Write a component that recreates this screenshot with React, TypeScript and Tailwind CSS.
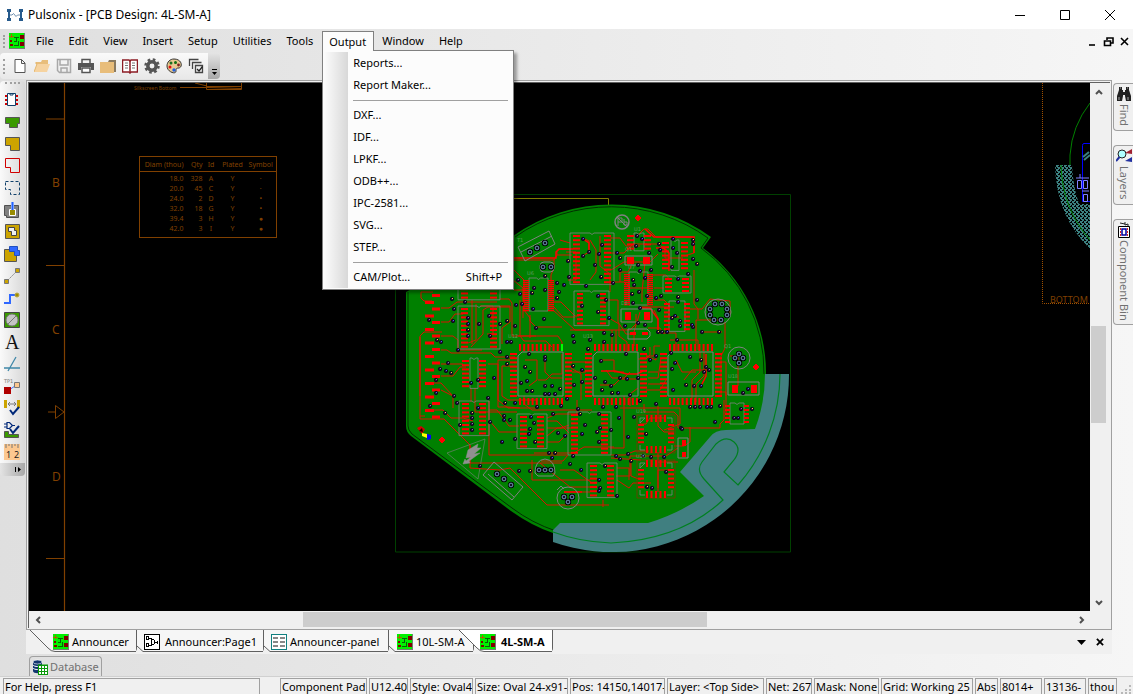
import type { ReactNode } from 'react';

/* ---------- ICONS ---------- */

type IconProps = { children: ReactNode; className?: string };

function Icon({ children, className = 'w-4 h-4' }: IconProps) {
    return (
        <svg viewBox="0 0 16 16" className={`${className} shrink-0`} fill="none" aria-hidden="true">
            {children}
        </svg>
    );
}

const PcbIcon = () => (
    <Icon>
        <g shapeRendering="crispEdges">
            <rect width="16" height="16" fill="#00f000" />
            <path d="M2 1v4M0 3h5" stroke="#b06000" />
            <path d="M11 2h4v4h-4zM11 9h4v4h-4zM1 7h2v2H1zM1 11h3v2H1z" fill="#800000" />
            <path d="M5 4.500h5M7.500 4v4M5 8.500h3M5 12.500h4V8" stroke="#086008" />
            <path d="M15.500 0v16M0 15.500h16" stroke="#708070" />
        </g>
    </Icon>
);

const SchematicIcon = () => (
    <Icon>
        <g shapeRendering="crispEdges" stroke="#000">
            <rect x=".5" y=".5" width="15" height="15" fill="#fff" />
            <path d="M2.500 2.500h2v3h-2zM2.500 9.500h2v3h-2zM5 4.500h3M5 11.500h3M11 8h2M13.500 6.500v3" />
            <path d="M7.500 5.500h2l1 1v3l-1 1h-2z" />
        </g>
    </Icon>
);

const PanelIcon = () => (
    <Icon>
        <g shapeRendering="crispEdges">
            <rect x=".5" y=".5" width="15" height="15" fill="#fff" stroke="#108080" />
            <path d="M2 3h5v2H2zM9 3h5v2H9zM2 7h5v2H2zM9 7h5v2H9zM2 11h5v2H2zM9 11h5v2H9z" fill="#888" />
        </g>
    </Icon>
);

const DatabaseIcon = () => (
    <Icon>
        <path d="M1 3v9c0 3 9 3 9 0V3" fill="#12356f" />
        <ellipse cx="5.500" cy="3" rx="4.500" ry="2" fill="#12356f" stroke="#fff" strokeWidth=".6" />
        <path d="M1 6c1 2 8 2 9 0M1 9c1 2 8 2 9 0" stroke="#fff" />
        <path d="M6 5.500h10V16H6z" fill="#0a9a0a" />
        <path d="M7 7h2v2H7zM10 7h2v2h-2zM13 7h2v2h-2zM7 10h2v2H7zM10 10h2v2h-2zM13 10h2v2h-2zM7 13h2v2H7zM10 13h2v2h-2zM13 13h2v2h-2z" fill="#fff" />
    </Icon>
);

const LogoIcon = () => (
    <Icon>
        <path d="M0 2h4v3H3v6h1v3H0v-3h1V5H0zM12 2h4v3h-1v6h1v3h-4v-3h1V5h-1z" fill="#265a8c" />
        <path d="M3 8h2l1.500-1.500L9 9.500 10.500 8H13" stroke="#7090b0" />
    </Icon>
);

const FILE_TOOLS = [
    {
        label: 'New',
        icon: <path d="M3 1.500h6.500l3.500 3.500v9.500H3zM9.500 1.500v4H13" fill="#fff" stroke="#555" />,
    },
    {
        label: 'Open',
        icon: (
            <>
                <path d="M2 4h5l1-2h6v4H2z" fill="#e8bd7a" />
                <path d="M3 6h13l-3 8H0z" fill="#f6d3a0" />
                <path d="M0 14 3 6h-1v-2" stroke="#e4b870" />
            </>
        ),
    },
    {
        label: 'Save',
        icon: (
            <>
                <path d="M1.500 1.500h13v13h-11l-2-2z" stroke="#a8a8a8" strokeWidth="1.500" />
                <path d="M4 2v5h8V2M5 14v-4h6v4" stroke="#a8a8a8" strokeWidth="1.500" />
            </>
        ),
    },
    {
        label: 'Print',
        icon: (
            <>
                <path d="M4 5V1.500h8V5" stroke="#555" strokeWidth="1.500" />
                <path d="M0 5h16v7h-3V9H3v3H0z" fill="#555" />
                <path d="M4 10h8v4.500H4z" fill="#fff" stroke="#555" strokeWidth="1.500" />
            </>
        ),
    },
    {
        label: 'Library',
        icon: (
            <>
                <path d="M0 4h14v11H0z" fill="#e8bd7a" />
                <path d="M8 4l1-2h7v12h-2V4z" fill="#8a7a60" />
            </>
        ),
    },
    {
        label: 'Report book',
        icon: (
            <>
                <path d="M.5 2h6.500l1 1 1-1h6.500v12H9l-1 1-1-1H.5z" fill="#fff" stroke="#8c1c24" strokeWidth="1.500" />
                <path d="M8 3v12" stroke="#8c1c24" strokeWidth="1.500" />
                <path d="M3 5h3M3 7.500h3M3 10h3M10 5h3M10 7.500h3M10 10h3" stroke="#777" />
            </>
        ),
    },
    {
        label: 'Options',
        icon: (
            <>
                <circle cx="8" cy="8" r="4.200" stroke="#555" strokeWidth="3.500" />
                <circle cx="8" cy="8" r="6.500" stroke="#555" strokeWidth="2.500" strokeDasharray="2.600 2.500" />
            </>
        ),
    },
    {
        label: 'Colours',
        icon: (
            <>
                <path d="M8 1c8 0 9 8 5 9-3 0-3 1-3 3 0 4-9 1-9-5 0-4 3-7 7-7z" fill="#e8c890" stroke="#333" />
                <circle cx="5" cy="5" r="1.500" fill="#207020" />
                <circle cx="9.500" cy="4.500" r="1.500" fill="#107010" />
                <circle cx="12.500" cy="7" r="1.400" fill="#802020" />
                <circle cx="4" cy="9" r="1.500" fill="#e01010" />
                <circle cx="8" cy="12" r="1.700" fill="#2060e0" />
            </>
        ),
    },
    {
        label: 'Design rule check',
        icon: (
            <>
                <path d="M1.500 8V1.500h9M4.500 11V4.500h9M7.500 14.500v-7h7v7z" stroke="#444" strokeWidth="1.300" />
                <path d="M9 11l2 2 3.500-4.500" stroke="#222" strokeWidth="1.300" />
            </>
        ),
    },
];

const DESIGN_TOOLS = [
    {
        label: 'Component',
        icon: (
            <>
                <path d="M1 3h3v2H1zM1 7h3v2H1zM1 11h3v2H1zM11 3h3v2h-3zM11 7h3v2h-3zM11 11h3v2h-3z" fill="#d00000" />
                <path d="M3.500 1.500h8v12h-8z" fill="#fff" stroke="#10406a" />
                <path d="M6 2v1h3V2" stroke="#10406a" />
            </>
        ),
    },
    {
        label: 'Pad shape',
        icon: <path d="M1.500 3.500h14v6h-2v4h-8v-4h-4z" fill="#3a9a00" stroke="#555" />,
    },
    { label: 'Copper', icon: <path d="M1.500 1.500h14v13h-9v-5h-5z" fill="#cca400" stroke="#555" /> },
    { label: 'Board', icon: <path d="M1.500 .5h14v14h-9v-5h-5z" stroke="#d00000" /> },
    {
        label: 'Area',
        icon: <path d="M1.500 1.500h14v13h-9v-5h-5z" stroke="#10406a" strokeDasharray="3 2" />,
    },
    {
        label: 'Pour copper',
        icon: (
            <>
                <path d="M.5 3.500h14v12h-12v-2h-2z" fill="#808080" stroke="#505050" />
                <path d="M5.500 7.500h6v6h-6z" fill="#998c00" stroke="#fff" />
                <path d="M8.500 0v8" stroke="#78a0ff" strokeWidth="3" />
                <path d="M8.500 0v8" stroke="#2060ff" />
            </>
        ),
    },
    {
        label: 'Cutout',
        icon: (
            <>
                <path d="M1.500 .5h14v14h-14z" fill="#cca400" stroke="#555" />
                <path d="M4.500 3.500h6v3h2v5h-5v-4h-3z" fill="#f0f0f0" stroke="#444" />
            </>
        ),
    },
    {
        label: 'Template',
        icon: (
            <>
                <path d="M.5 3.500h12v12H.5z" fill="#cca400" stroke="#555" />
                <path d="M5.500 .5h8v4h2v5h-5v-4h-5z" fill="#3068ff" stroke="#2050c0" />
            </>
        ),
    },
    {
        label: 'Connection',
        icon: (
            <>
                <path d="M4 12l8-8" stroke="#888" strokeDasharray="2 1" />
                <path d="M.5 11.500h4v4h-4zM11.500 .5h4v4h-4z" fill="#cca400" stroke="#777" />
            </>
        ),
    },
    {
        label: 'Track',
        icon: (
            <>
                <path d="M0 13h6V5h6" stroke="#3068ff" strokeWidth="2" />
                <circle cx="13" cy="5" r="2" fill="#a08c00" stroke="#b8a840" />
            </>
        ),
    },
    {
        label: 'Via',
        icon: (
            <>
                <path d="M.5 .5h15v15H.5z" fill="#3a9a00" stroke="#444" />
                <circle cx="8" cy="8" r="6" fill="#c4c4c4" stroke="#777" />
                <path d="M4 12l8-8" stroke="#777" />
            </>
        ),
    },
    {
        label: 'Text',
        icon: (
            <text x="1" y="15" fontSize="20" fontFamily="Liberation Serif, serif" fill="#111">A</text>
        ),
    },
    {
        label: 'Line',
        icon: <path d="M0 12h16M4 15L12 1" stroke="#4088a8" strokeWidth="1.300" />,
    },
    {
        label: 'Test point',
        icon: (
            <>
                <text x="0" y="5" fontSize="5" fontFamily="DejaVu Sans, sans-serif" fill="#777">TP1</text>
                <path d="M5 12l6-4" stroke="#4070ff" />
                <path d="M0 9h7v7H0z" fill="#b00000" />
                <path d="M10.500 4.500h5v5h-5z" fill="#fcc890" stroke="#777" />
            </>
        ),
    },
    {
        label: 'Check spacing',
        icon: (
            <>
                <path d="M0 0h3v8H0zM13 0h3v8h-3z" fill="#cca400" />
                <path d="M4 4h8M6 2L4 4l2 2M10 2l2 2-2 2" stroke="#777" />
                <path d="M6 10l3 4 6-7" stroke="#002878" strokeWidth="2" />
            </>
        ),
    },
    {
        label: 'Check nets',
        icon: (
            <>
                <path d="M.5 9.500h4v3h10v3H.5z" fill="#3a9a00" stroke="#555" />
                <path d="M0 2h3M0 5h3M3 .5h2.500L8 3v1L5.500 6.500H3zM8 3.500h3" stroke="#002878" strokeWidth="1.200" />
                <path d="M6 7l3 4 6-7" stroke="#002878" strokeWidth="2" />
            </>
        ),
    },
    {
        label: 'Measure',
        icon: (
            <>
                <path d="M0 0h16v16H0z" fill="#fcc890" />
                <path d="M2 0v4M5 0v2M8 0v4M11 0v2M14 0v4" stroke="#777" />
                <text x="2" y="14" fontSize="9" fontFamily="Noto Sans, sans-serif" fill="#222">1</text>
                <text x="10" y="14" fontSize="9" fontFamily="Noto Sans, sans-serif" fill="#222">2</text>
            </>
        ),
    },
];

/* ---------- MENU ---------- */

const MENUS = ['File', 'Edit', 'View', 'Insert', 'Setup', 'Utilities', 'Tools', 'Output', 'Window', 'Help'];

const OUTPUT_GROUPS = [
    [{ label: 'Reports...' }, { label: 'Report Maker...' }],
    [
        { label: 'DXF...' },
        { label: 'IDF...' },
        { label: 'LPKF...' },
        { label: 'ODB++...' },
        { label: 'IPC-2581...' },
        { label: 'SVG...' },
        { label: 'STEP...' },
    ],
    [{ label: 'CAM/Plot...', keys: 'Shift+P' }],
];

function OutputMenu() {
    return (
        <div
            role="menu"
            className="absolute left-0 top-full z-20 -mt-px w-[192px] border border-[#808080] bg-[#fcfcfc] p-px shadow-[3px_3px_3px_rgba(0,0,0,0.35)]"
        >
            <div className="bg-linear-to-r from-[#fcfcfc] to-[#d8d8d8] bg-[length:24px_100%] bg-no-repeat">
                {OUTPUT_GROUPS.map((group, i) => (
                    <div key={i}>
                        {i > 0 && <div className="flex h-2 items-center pl-[29px] pr-1"><hr className="w-full border-[#a0a0a0]" /></div>}
                        {group.map((item) => (
                            <button
                                key={item.label}
                                role="menuitem"
                                className="flex h-[22px] w-full items-center justify-between pl-[29px] pr-[10px]"
                            >
                                <span>{item.label}</span>
                                {'keys' in item && <span>{item.keys}</span>}
                            </button>
                        ))}
                    </div>
                ))}
            </div>
        </div>
    );
}

/* ---------- BOARD ---------- */

type Point = [number, number];

const range = (n: number) => Array.from({ length: n }, (_, i) => i);

function Pads({ x, y, w, h, n, dx = 0, dy = 0 }: { x: number; y: number; w: number; h: number; n: number; dx?: number; dy?: number }) {
    return (
        <>
            {range(n).map((i) => (
                <rect key={i} x={x + dx * i} y={y + dy * i} width={w} height={h} fill="#ff0000" />
            ))}
        </>
    );
}

// dual in line part: outline plus a column of pads at each side
function Dip({ x, y, w, n, pad = 7, inset = 3, pitch = 4.2 }: { x: number; y: number; w: number; n: number; pad?: number; inset?: number; pitch?: number }) {
    const h = n * pitch + 1;
    const padHeight = pitch < 3 ? 1.3 : 2;
    return (
        <g>
            <path
                d={`M${x} ${y}h${w / 2 - 2}q2 3 4 0h${w / 2 - 2}v${h}h${-w}z`}
                fill="none"
                stroke="#808080"
                strokeWidth=".8"
            />
            <Pads x={x + inset} y={y + 2} w={pad} h={padHeight} n={n} dy={pitch} />
            <Pads x={x + w - inset - pad} y={y + 2} w={pad} h={padHeight} n={n} dy={pitch} />
        </g>
    );
}

function Quad({ x, y }: { x: number; y: number }) {
    return (
        <g>
            <path d={`M${x + 4} ${y}h41v44h-45v-40z`} fill="none" stroke="#808080" />
            <Pads x={x + 1} y={y - 8} w={2} h={7} n={11} dx={4.2} />
            <Pads x={x + 1} y={y + 46} w={2} h={7} n={11} dx={4.2} />
            <Pads x={x - 8} y={y + 1} w={7} h={2} n={11} dy={4.2} />
            <Pads x={x + 47} y={y + 1} w={7} h={2} n={11} dy={4.2} />
        </g>
    );
}

function Plcc({ x, y }: { x: number; y: number }) {
    return (
        <g>
            <path d={`M${x - 3} ${y - 3}h38v38h-38z`} fill="none" stroke="#a02000" strokeWidth=".6" />
            <path
                d={`M${x} ${y + 5}v-5h5zM${x + 27} ${y}h5v5M${x + 32} ${y + 27}v5h-5M${x + 5} ${y + 32}h-5v-5`}
                fill="none"
                stroke="#808080"
                strokeWidth=".8"
            />
            <Pads x={x + 6} y={y - 3} w={2} h={7} n={5} dx={4.5} />
            <Pads x={x + 6} y={y + 28} w={2} h={7} n={5} dx={4.5} />
            <Pads x={x - 2} y={y + 6} w={6} h={2} n={5} dy={4.3} />
            <Pads x={x + 28} y={y + 6} w={6} h={2} n={5} dy={4.3} />
        </g>
    );
}

function Holes({ at }: { at: Point[] }) {
    return (
        <>
            {at.map(([x, y]) => (
                <circle key={`${x}-${y}`} cx={x} cy={y} r="2" fill="#101020" stroke="#000" strokeWidth="2.400" />
            ))}
            {at.map(([x, y]) => (
                <circle key={`${x}-${y}-ring`} cx={x} cy={y} r="1.900" stroke="#78a8c8" fill="#101020" strokeWidth=".9" />
            ))}
        </>
    );
}

const TRACKS = [
    // left bank
    'M432 301h-8l-3-3v-6h12', 'M420 396v-60l4-4h18', 'M425 416h-5v-79', 'M441 308h8l8-6h40',
    'M441 322h8l6-8h8', 'M441 336h12l5 4v10h24', 'M441 350h6l4 3h40l4 4h20', 'M441 364h22',
    'M441 376h12l7-9h6', 'M433 383h8l12 13', 'M433 410h10l8 8h12l10 3', 'M420 416v3h24l10 10 16 16v23l30 2 10-2 37 37h62',
    'M470 445v18h92', 'M441 390l12 6v12', 'M472 300v44', 'M476 304v36l-8 3', 'M480 306h13v28h-6',
    'M500 306h10v16l-8 6v16', 'M500 299h9l3 4v33h24', 'M471 347l12-13v-24l5-3h22',
    // upper centre
    'M514 260h40l3-5h15', 'M554 259v9l-3 7v22', 'M557 255v-4l3-2h10', 'M514 270l10 10v30l6 8v20',
    'M530 315v6l6 6h26', 'M553 306l10 11h12', 'M553 302h8l14 14h4', 'M553 310l22 20h30',
    'M518 336h40l4 6v8', 'M520 300v36l4 5h22l6 6', 'M513 280l10 8v30', 'M514 290h12M560 240l10 3M566 252h10v28h-8',
    'M583 238l6 3v11l-5 3', 'M590 240l6 10v22l-6 8', 'M600 236v30l10 8v18', 'M570 330h60l6-6v-10',
    'M610 253h14l9-9h14', 'M610 238h10l6 8h14', 'M610 282h14l6 6h18', 'M611 270l13-8h26l8-8',
    'M608 300h10v22l8 12h10', 'M609 318l10 6v12l8 6v12', 'M612 330v14', 'M616 330v18',
    // upper right
    'M638 235l6-6h4l8 8h38v16l-10 3', 'M651 244h8l6 6v8h18', 'M645 262l-3 30v10', 'M634 260l-6 12h-8v10',
    'M652 275h14l4 5', 'M654 300h10l5 5v12h10', 'M654 288h10', 'M694 270v34l4 5v10', 'M690 309h12l8-10 20 2v14h-6',
    'M696 344v-24h23', 'M700 332h22', 'M725 322v26l-4 8v40', 'M730 356h8v30', 'M654 310l4 8v15h18v18',
    'M640 307h34M640 312l-6 20v14', 'M650 347v8l-4 4h-8', 'M660 346h-6v10h-8', 'M648 328h12l4 6', 'M670 340h28v10',
    // middle
    'M510 360h-12v40l10 8h28', 'M510 366h-8v30l6 4h28', 'M488 364h10v43h10l12 1', 'M489 401v54h78', 'M489 410h8l12 16h10',
    'M471 388v14', 'M475 388v24h42', 'M489 420l10 12h18', 'M547 421h10l12 12M547 428h14l8-3', 'M547 436l10-8h14M547 442h12l8-8',
    'M547 418l10-4h20v-14M571 368l10 6v26', 'M572 372h14M572 362h14', 'M524 396v8l8 6h60', 'M538 380h8l6-6h10v-20',
    'M525 360h12v20l-8 6', 'M545 356v16l6 6h12', 'M600 360h14v12h10', 'M606 370l6 8h12l6-6', 'M600 385h14l6-6h16',
    'M648 372h10M648 378h10l3-20', 'M648 384h12M646 390h14l6-10', 'M646 356l10 4v-4', 'M676 360l6 12h14', 'M684 380l8-10h12',
    'M700 352v20l-8 8v20', 'M704 352v24l-8 8v18', 'M620 408h60v16l-16 6', 'M644 404v8h30l4 4v12h42v-4l4-4v-20',
    'M722 392h4v22', 'M720 362h6v34', 'M690 427v15l-6 4h-10', 'M678 448l-12 8h-36v20h-14', 'M624 396v52h-14', 'M630 406v-12l8-6',
    // lower
    'M611 455h14l10-4h14', 'M568 455l-5 6h-22', 'M611 458l30 2', 'M540 463l30 24h20', 'M534 453h40l10-6h30',
    'M532 460v20h58', 'M560 470h14l18 13', 'M617 480l12 8 4-5h18', 'M617 468h12v12', 'M564 492h26', 'M603 500v7',
    'M631 461v15l10 4', 'M652 455v10M658 452v10h20', 'M658 492v-30', 'M668 470h-10v18', 'M640 424h6l4-6h14', 'M658 406v20l6 6h10',
];

const THICK_TRACKS = [
    'M514 258h42v-6l3-3h14', 'M645 229l9 8h40v16', 'M640 308h10l8 11v13', 'M601 371h14l12 3h10l6-3', 'M656 248h8l5 5v18',
    'M583 239l6 4v10', 'M700 388l6-12v-22', 'M564 492h18',
];

const VIAS: Point[] = [
    [452, 299], [465, 302], [454, 309], [453, 321], [429, 320], [437, 340], [441, 342], [479, 324], [468, 318], [468, 324],
    [468, 330], [468, 336], [458, 350], [489, 316], [490, 336], [507, 321], [515, 326], [500, 352], [507, 342], [511, 342],
    [500, 324], [516, 305], [522, 304], [518, 280], [520, 294], [532, 293], [534, 288], [533, 309], [544, 319], [536, 328],
    [545, 276], [545, 290], [557, 283], [564, 285], [569, 277], [568, 261], [583, 239], [583, 256], [589, 252], [586, 286],
    [557, 298], [559, 292], [573, 336], [574, 342], [590, 340], [588, 349], [582, 306], [595, 265], [599, 254], [602, 245],
    [601, 277], [617, 253], [620, 270], [613, 283], [598, 296], [598, 312], [606, 300], [609, 318], [604, 333], [612, 335],
    [620, 258], [637, 236], [636, 246], [642, 239], [649, 253], [659, 244], [660, 250], [638, 265], [651, 270], [640, 271],
    [633, 280], [634, 285], [645, 278], [639, 292], [647, 296], [632, 294], [633, 303], [640, 308], [656, 298], [661, 296],
    [678, 297], [678, 302], [697, 300], [693, 327], [673, 239], [693, 240], [693, 244], [673, 248], [677, 253], [693, 259],
    [697, 264], [672, 267], [688, 274], [678, 279], [659, 310], [672, 318], [675, 316], [680, 321], [680, 326], [692, 325],
    [658, 332], [662, 332], [667, 332], [677, 340], [702, 332], [719, 332], [638, 323], [645, 325], [625, 326], [604, 342],
    [644, 349], [656, 356], [671, 353], [690, 357], [675, 363], [701, 360], [706, 367], [650, 360], [626, 354], [601, 361],
    [525, 367], [529, 354], [545, 357], [545, 360], [507, 357], [507, 364], [494, 378], [448, 363], [440, 369], [446, 371],
    [451, 373], [436, 380], [436, 393], [430, 406], [454, 396], [445, 413], [457, 403], [488, 398], [471, 383], [478, 380],
    [530, 372], [527, 381], [521, 383], [545, 386], [552, 386], [560, 389], [545, 394], [549, 394], [555, 394], [527, 391],
    [532, 391], [537, 407], [561, 406], [567, 399], [578, 409], [573, 366], [582, 370], [574, 385], [582, 382], [515, 403],
    [505, 403], [504, 416], [504, 420], [510, 420], [490, 422], [472, 413], [472, 418], [472, 424], [478, 408], [472, 430],
    [460, 425], [531, 417], [534, 423], [530, 429], [529, 434], [535, 442], [515, 439], [502, 442], [480, 466], [519, 471],
    [530, 471], [553, 414], [558, 433], [565, 436], [549, 453], [555, 453], [552, 458], [573, 456], [570, 464], [581, 470],
    [580, 414], [585, 425], [582, 434], [595, 378], [605, 382], [602, 390], [611, 386], [620, 378], [627, 379], [638, 378],
    [612, 393], [618, 393], [630, 395], [603, 407], [616, 407], [640, 401], [656, 404], [619, 418], [599, 414], [600, 428],
    [597, 432], [611, 430], [599, 442], [628, 437], [634, 417], [646, 434], [616, 456], [620, 459], [628, 454], [643, 456],
    [631, 461], [651, 457], [664, 457], [681, 428], [682, 429], [647, 487], [652, 488], [666, 472], [599, 480], [600, 488],
    [605, 466], [599, 491], [617, 496], [672, 369], [673, 390], [686, 385], [694, 386], [701, 386], [704, 372], [709, 370],
    [690, 407], [695, 407], [700, 407], [707, 407], [711, 407], [720, 406], [715, 422], [741, 409], [734, 418], [738, 418],
    [752, 409], [743, 393], [748, 389],
];

function Board() {
    return (
        <g>
            <path d="M395.500 194.500h395v357.500h-395z" fill="none" stroke="#004000" />
            <path d="M500 198.500h108.500v8" fill="none" stroke="#808000" />
            <path
                d="M406 330V292l107-56A169 169 0 0 1 711 237l-8 11A155 155 0 0 1 766 374L780 374A169 169 0 0 1 611 543 169 169 0 0 1 553 533Q532 526 511 511L411 436Q406 432 406 426z"
                fill="#008000"
            />
            <path
                d="M408 292V426Q408 430 412 434L512 508Q532 523 556 531M515 237A167 167 0 0 1 708 238l-7 10A153 153 0 0 1 764 374"
                fill="none"
                stroke="#003000"
            />
            <path d="M560 523h88Q678 514 704 496L680 472l30-35q5-7 16-7l29-1Q765 403 765 374h24A177 177 0 0 1 553 542v-12z" fill="#407f80" />
            <path
                d="M780 374A169 169 0 0 1 738 485L724 472l10-12q8-11 0-18-8-7-18 2l-14 18q-6 8 2 17l19 21Q680 540 611 543 580 542 553 532"
                fill="none"
                stroke="#008020"
                strokeWidth="1.200"
            />

            <g fill="none" stroke="#dc1000">
                {TRACKS.map((d) => <path key={d} d={d} />)}
            </g>
            <g fill="none" stroke="#ff0000" strokeWidth="1.500">
                {THICK_TRACKS.map((d) => <path key={d} d={d} />)}
            </g>

            {/* edge connector */}
            <Pads x={432} y={294} w={8} h={3} n={10} dy={13.5} />
            <Pads x={425} y={301} w={9} h={3} n={9} dy={13.5} />

            <Dip x={570} y={233} w={44} n={12} />
            <Dip x={574} y={291} w={35} n={8} pad={6} />
            <Dip x={458} y={282} w={42} n={4} />
            <Dip x={458} y={306} w={42} n={10} />
            <Dip x={459} y={401} w={30} n={8} />
            <Dip x={517} y={414} w={30} n={8} />
            <Dip x={568} y={412} w={43} n={10} />
            <Dip x={587} y={463} w={30} n={8} />
            <Dip x={663} y={276} w={28} n={4} inset={2} pitch={4} />
            <Dip x={470} y={358} w={8} n={7} inset={-8} />
            <Dip x={671} y={240} w={8} n={7} inset={-9} />
            <Dip x={669} y={301} w={16} n={7} inset={-5} pad={6} />
            <Dip x={634} y={233} w={10} n={4} inset={-7} />
            <Dip x={529} y={278} w={19} n={16} inset={-6} pad={6} pitch={2} />
            <Dip x={629} y={272} w={19} n={16} inset={-5} pad={6} pitch={2} />
            <Dip x={730} y={403} w={14} n={5} inset={-5} pad={5} pitch={4} />
            <Quad x={518} y={352} />
            <Quad x={593} y={352} />
            <Quad x={668} y={352} />
            <Plcc x={640} y={418} />
            <Plcc x={640} y={463} />

            {/* two pad parts */}
            <g fill="#ff0000">
                <path d="M627 257h7v7h-7zM643 257h7v7h-7zM625 312h6v8h-6zM644 312h6v8h-6zM732 385h6v8h-6zM751 385h6v8h-6zM682 440h4v6h-4zM682 452h4v5h-4zM630 332h6v3h-6zM642 332h6v3h-6z" />
                <path d="M638 215l3 3-3 3-3-3zM756 364l3 3-3 3-3-3zM442 437l3 3-3 3-3-3z" stroke="#ff0000" />
            </g>
            <g fill="none" stroke="#808080">
                <path d="M625 256h27v9h-27zM621 309h31v13h-31zM728 382h31v13h-31zM678 438h10v20h-10z" />
                <path d="M628 329h19l3 3v4l-3 3h-19z" />
                <path d="M518 247l31-16 6 13-30 17zM521 252l31-16" />
                <path d="M494 462l29 25-11 13-29-25zM514 497l-26-23" />
                <rect x="540" y="262" width="14" height="10" rx="4" />
                <path d="M535 473q0-13 10-14 10 1 10 14l-2 3h-15z" />
                <path d="M447 453l38-14-7 40z" strokeWidth=".6" />
                <circle cx="568" cy="498" r="11" />
                <path d="M557 490l4-4 3 3" />
                <circle cx="718" cy="312" r="13" />
                <circle cx="739" cy="358" r="11" />
                <circle cx="622" cy="222" r="7" strokeWidth="1.500" />
                <path d="M617 217l10 10M618 226v-8h4v4h-4M624 219v6h3v-3h-3" />
            </g>
            {/* high voltage warning */}
            <path d="M478 444l-10 6-2 8 5-1-5 4-1-2-2 5 7-1-1-2 11-8-6 1 7-6-4 0z" fill="#909090" stroke="#909090" strokeWidth=".5" />

            <g>
                {VIAS.map(([x, y], i) => (
                    <g key={i}>
                        <circle cx={x} cy={y} r="1.700" fill="#301040" stroke="#080818" strokeWidth=".9" />
                        <rect x={x} y={y - 1} width="1" height="1" fill={i % 5 === 0 ? '#ffe040' : i % 3 === 0 ? '#4060ff' : '#8080a0'} />
                    </g>
                ))}
            </g>

            <Holes at={[[530, 252], [537, 248], [545, 243], [543, 267], [551, 267], [497, 474], [504, 479], [511, 485], [539, 470], [545, 470], [551, 470]]} />
            <Holes at={[[564, 497], [572, 497], [568, 502], [715, 304], [722, 304], [727, 309], [727, 315], [721, 320], [714, 320], [710, 315], [710, 309]]} />
            <Holes at={[[735, 358], [743, 358], [739, 354], [739, 363]]} />

            <path d="M417 428l4-2 4 3-3 5z" fill="#d00000" />
            <path d="M419 431l3-3 1 4z" fill="#200000" />
            <path d="M422 433l5 1v4l-5-2z" fill="#ffff00" />
            <path d="M427 434l4 1v4l-4 1z" fill="#0000ff" />
            <path d="M561 344h2v7h-2z" fill="#00ff00" />

            <g fontFamily="DejaVu Sans, sans-serif" fontSize="5" fill="#609860">
                <text x="517" y="242">T1</text>
                <text x="527" y="275">U6</text>
                <text x="508" y="338">U12</text>
                <text x="583" y="338">U13</text>
                <text x="634" y="231">U1</text>
                <text x="625" y="251">Q1</text>
                <text x="628" y="269">U7</text>
                <text x="621" y="305">D8</text>
                <text x="724" y="348">Q1</text>
                <text x="636" y="413">U19</text>
                <text x="636" y="458">U20</text>
                <text x="728" y="378">U18</text>
            </g>
        </g>
    );
}

// mirrored view of the far side, cut off by the scroll bar
function BottomView() {
    return (
        <g fill="none">
            <defs>
                <pattern id="hatch" width="4" height="4" patternUnits="userSpaceOnUse">
                    <rect width="4" height="4" fill="#3c8080" />
                    <path d="M0 0h2v1H0zM2 2h2v1H2zM0 3h1v1H0zM3 1h1v1H3z" fill="#000" />
                </pattern>
            </defs>
            <path d="M1042.500 83v220.500H1090" stroke="#a05000" strokeDasharray="1 1" />
            <path d="M1055 165h17Q1073 187 1079 204h11v45Q1056 216 1055 165z" fill="url(#hatch)" />
            <path d="M1061 165Q1062 208 1090 240M1070 165v-10Q1072 126 1090 103" stroke="#008000" />
            <path d="M1090 143.500h-6q-1.500 0-1.500 2v56h8" stroke="#0000ff" />
            <path d="M1083 157l6-5M1084 160l6-5" stroke="#3c8080" strokeWidth="2" />
            <path d="M1077.500 180.500h4v8h-4zM1083.500 180.500h4v8h-4zM1083.500 194.500h4v7h-4zM1076 178h13M1080 174v4M1082 191h7" stroke="#8080ff" />
        </g>
    );
}

function SheetFrame() {
    return (
        <g>
            <g stroke="#804000" fill="none">
                <path d="M64.500 83v528M46 119h18M46 265.500h18M48 412h7M46 558.500h18" strokeWidth="1.200" />
                <path d="M55.500 405.500v13l8.500-6.500z" />
                <path d="M180 87.500h27l35 1M195 83l12 3M206.500 83v6.500h35V83M206.500 86.500h35" />
            </g>
            <g fontFamily="Noto Sans, sans-serif" fontSize="12" fill="#804000">
                <text x="52" y="187">B</text>
                <text x="52" y="334">C</text>
                <text x="52" y="481">D</text>
                <text x="134" y="90" fontSize="5">Silkscreen Bottom</text>
                <text x="1050" y="303" fontSize="9">BOTTOM</text>
            </g>
        </g>
    );
}

const DRILLS = [
    { diam: '18.0', qty: 328, id: 'A', mark: '·' },
    { diam: '20.0', qty: 45, id: 'C', mark: '·' },
    { diam: '24.0', qty: 2, id: 'D', mark: '•' },
    { diam: '32.0', qty: 18, id: 'G', mark: '•' },
    { diam: '39.4', qty: 3, id: 'H', mark: '●' },
    { diam: '42.0', qty: 3, id: 'I', mark: '●' },
];

function DrillTable() {
    return (
        <table className="absolute left-[110px] top-[73px] w-[138px] table-fixed border-collapse border border-[#804000] text-center text-[7px] leading-[10px] text-[#804000]">
            <thead>
                <tr className="h-[15px] border-b border-[#804000]">
                    <th className="w-[44px] p-0 pt-px text-right font-normal whitespace-nowrap">Diam (thou)</th>
                    <th className="w-[19px] p-0 pt-px text-right font-normal">Qty</th>
                    <th className="w-[17px] p-0 pt-px font-normal">Id</th>
                    <th className="w-[26px] p-0 pt-px font-normal">Plated</th>
                    <th className="p-0 pt-px font-normal">Symbol</th>
                </tr>
            </thead>
            <tbody className="before:block before:h-[2px] after:block after:h-[3px]">
                {DRILLS.map((d) => (
                    <tr key={d.id} className="h-[10px]">
                        <td className="p-0 text-right">{d.diam}</td>
                        <td className="p-0 text-right">{d.qty}</td>
                        <td className="p-0">{d.id}</td>
                        <td className="p-0">Y</td>
                        <td className="p-0">{d.mark}</td>
                    </tr>
                ))}
            </tbody>
        </table>
    );
}

/* ---------- SCROLL BARS ---------- */

function Arrow({ d, label, className }: { d: string; label: string; className: string }) {
    return (
        <button aria-label={label} className={`flex shrink-0 items-center justify-center ${className}`}>
            <svg viewBox="0 0 8 8" className="h-2 w-2" fill="none" stroke="#505050" strokeWidth="2">
                <path d={d} />
            </svg>
        </button>
    );
}

/* ---------- DOCUMENT TABS ---------- */

const DOCS = [
    { name: 'Announcer', icon: <PcbIcon />, slant: true, className: 'w-[107px] pl-[23px] gap-[3px]' },
    { name: 'Announcer:Page1', icon: <SchematicIcon />, className: 'w-[127px] pl-[7px] gap-[5px]' },
    { name: 'Announcer-panel', icon: <PanelIcon />, className: 'w-[125px] pl-[7px] gap-[3px]' },
    { name: '10L-SM-A', icon: <PcbIcon />, className: 'w-[85px] pl-2 gap-[3px]' },
    { name: '4L-SM-A', icon: <PcbIcon />, active: true, slant: true, className: 'w-[94px] pl-[21px] gap-[5px] -ml-[15px] font-bold' },
];

function DocTab({ doc }: { doc: (typeof DOCS)[number] }) {
    return (
        <button
            role="tab"
            aria-selected={!!doc.active}
            className={`relative flex h-[22px] shrink-0 items-center rounded-br-sm border-r border-[#606060] pt-px ${doc.className}`}
        >
            <svg className="absolute inset-0 h-full w-full" fill="none" stroke="#606060">
                {doc.slant ? (
                    <>
                        <path d="M0 0L18 18Q21 21.500 25 21.500H200V0z" fill={doc.active ? '#fff' : '#f4f4f4'} stroke="none" />
                        <path d="M0 0L18 18Q21 21.500 25 21.500H200" />
                    </>
                ) : (
                    <>
                        <path d="M0 0V16L6 21.500H200V0z" fill="#f6f6f6" stroke="none" />
                        <path d="M0 16L6 21.500H200" />
                    </>
                )}
            </svg>
            <span className="relative flex">{doc.icon}</span>
            <span className="relative whitespace-nowrap">{doc.name}</span>
        </button>
    );
}

/* ---------- STATUS BAR ---------- */

const STATUS = [
    { text: 'Component Pad', width: 'w-[87px]' },
    { text: 'U12.40', width: 'w-[39px]' },
    { text: 'Style: Oval4', width: 'w-[63px]' },
    { text: 'Size: Oval 24-x91-', width: 'w-[93px]' },
    { text: 'Pos: 14150,14017-', width: 'w-[95px]' },
    { text: 'Layer: <Top Side>', width: 'w-[97px]' },
    { text: 'Net: 267', width: 'w-[46px]' },
    { text: 'Mask: None', width: 'w-[65px]' },
    { text: 'Grid: Working 25', width: 'w-[92px]' },
    { text: 'Abs', width: 'w-[23px]' },
    { text: '8014+', width: 'w-[42px]' },
    { text: '13136-', width: 'w-[42px]' },
    { text: 'thou', width: 'w-[29px]' },
];

const SIDE_TABS = [
    {
        label: 'Find',
        margin: '',
        icon: (
            <>
                <path d="M3 1h3v3H3zM10 1h3v3h-3zM3 4h4v6l-1 5H1V10zM9 4h4l2 6v5h-5l-1-5zM7 6h2v3H7z" fill="#222" />
                <path d="M4 2h1M11 2h1M3 11v3M12 11v3" stroke="#aaa" />
            </>
        ),
    },
    {
        label: 'Layers',
        margin: 'mt-[14px]',
        icon: (
            <>
                <path d="M9 5l7-4v5z" fill="#a02030" />
                <path d="M9 13l7-4v5z" fill="#2030a0" />
                <circle cx="6" cy="6" r="4" fill="#b0ffff" stroke="#222" />
                <path d="M3.500 9L0 13" stroke="#2030a0" strokeWidth="2" />
            </>
        ),
    },
    {
        label: 'Component Bin',
        margin: 'mt-[14px]',
        icon: (
            <>
                <path d="M4 1l5 1M9 0v3l3-1v3" stroke="#222" />
                <path d="M2.500 4.500h11v11h-11z" fill="#fff" stroke="#000" />
                <path d="M4.500 6v8M11.500 6v8" stroke="#e02020" strokeDasharray="2 1" />
                <path d="M6 7h4v6H6z" stroke="#0000a0" strokeWidth="1.500" />
            </>
        ),
    },
];

export default function App() {
    return (
        <div className='flex h-screen flex-col overflow-hidden bg-linear-to-r from-[#dfdfdf] to-[#f6f6f6] font-["Noto_Sans",sans-serif] text-[11px] leading-[16px] text-black'>
            {/* TITLE BAR */}
            <header className="flex h-[29px] shrink-0 items-center bg-white pl-[7px]">
                <LogoIcon />
                <h1 className="ml-[5px] text-[12px]">Pulsonix - [PCB Design: 4L-SM-A]</h1>
                <div className="ml-auto flex pr-px">
                    {[
                        ['Minimise', 'M0 5.500h10'],
                        ['Maximise', 'M.5 .5h9v9h-9z'],
                        ['Close', 'M0 0l10 10M10 0L0 10'],
                    ].map(([label, d]) => (
                        <button key={label} aria-label={label} className="flex h-[29px] w-[45px] items-center justify-center">
                            <svg viewBox="0 0 10 10" className="h-[10px] w-[10px] overflow-visible" fill="none" stroke="#000">
                                <path d={d} />
                            </svg>
                        </button>
                    ))}
                </div>
            </header>

            {/* MENU BAR */}
            <nav className="flex h-6 shrink-0 items-center pl-[3px]">
                <span className="h-[13px] border-l-2 border-dotted border-[#a0a0a0]" />
                <span className="mx-1"><PcbIcon /></span>
                <div className="flex gap-px">
                    {MENUS.map((name) =>
                        name === 'Output' ? (
                            <div key={name} className="relative ml-px">
                                <button aria-expanded="true" className="relative z-30 block h-5 border border-b-0 border-[#808080] bg-[#fcfcfc] pl-[6px] pr-[7px] leading-[18px]">
                                    {name}
                                </button>
                                <OutputMenu />
                            </div>
                        ) : (
                            <button key={name} className="h-5 px-[7px]">{name}</button>
                        )
                    )}
                </div>
                <div className="ml-auto flex items-center gap-[7px] pr-1">
                    {[
                        ['Minimise design', 'M1 8h6'],
                        ['Restore design', 'M3 3V1h6v5H7M.5 4h6v4.500h-6zM0 4h7'],
                        ['Close design', 'M1 1l7 7M8 1L1 8'],
                    ].map(([label, d]) => (
                        <button key={label} aria-label={label}>
                            <svg viewBox="0 0 9 9" className="h-[9px] w-[9px] overflow-visible" fill="none" stroke="#000" strokeWidth="1.600">
                                <path d={d} />
                            </svg>
                        </button>
                    ))}
                </div>
            </nav>

            {/* FILE TOOLBAR */}
            <div role="toolbar" aria-label="File" className="flex h-[27px] shrink-0 items-stretch pb-px">
                <div className="flex items-center rounded-l-sm bg-linear-to-b from-[#fafafa] to-[#e8e8e8] pl-[3px] pr-px">
                    <span className="mr-1 h-[15px] border-l-2 border-dotted border-[#a0a0a0]" />
                    {FILE_TOOLS.map((tool) => (
                        <button key={tool.label} aria-label={tool.label} className="flex h-[22px] w-[22px] items-center justify-center">
                            <Icon>{tool.icon}</Icon>
                        </button>
                    ))}
                </div>
                <button aria-label="Toolbar options" className="flex w-[12px] items-end justify-center rounded-r-sm bg-linear-to-b from-[#e4e4e4] to-[#a8a8a8] pb-1">
                    <svg viewBox="0 0 5 6" className="h-[6px] w-[5px]"><path d="M0 0h5v1H0zM0 3h5L2.500 6z" fill="#000" /></svg>
                </button>
            </div>

            <div className="flex min-h-0 flex-1">
                {/* DESIGN TOOLBAR */}
                <div role="toolbar" aria-label="Design" className="flex w-[26px] shrink-0 flex-col pr-px pt-px">
                    <div className="flex flex-col items-center rounded-t-sm bg-linear-to-r from-[#fafafa] to-[#d8d8d8] pr-px">
                        <span className="mt-px mb-[5px] w-[15px] border-t-2 border-dotted border-[#a0a0a0]" />
                        {DESIGN_TOOLS.map((tool) => (
                            <button key={tool.label} aria-label={tool.label} className="flex h-[22px] w-full items-center justify-center">
                                <Icon className="w-4 h-4 overflow-visible">{tool.icon}</Icon>
                            </button>
                        ))}
                    </div>
                    <button aria-label="More design tools" className="flex h-[13px] items-center justify-end rounded-b-sm bg-linear-to-r from-[#e4e4e4] to-[#a8a8a8] pr-1">
                        <svg viewBox="0 0 6 5" className="h-[5px] w-[6px]"><path d="M0 0h1v5H0zM3 0v5L6 2.500z" fill="#000" /></svg>
                    </button>
                </div>

                {/* DESIGN WINDOW */}
                <div className="flex min-w-0 flex-1 flex-col">
                    <div className="flex min-h-0 flex-1 flex-col border border-[#a0a0a0] bg-[#f0f0f0] p-px">
                        <div className="flex min-h-0 flex-1 flex-col border-l border-t border-[#606060] pr-[3px]">
                            <div className="flex min-h-0 flex-1">
                                <div className="relative min-w-0 flex-1 overflow-hidden bg-black">
                                    <svg viewBox="29 83 1061 528" preserveAspectRatio="xMidYMid slice" className="h-full w-full">
                                        <SheetFrame />
                                        <Board />
                                        <BottomView />
                                    </svg>
                                    <DrillTable />
                                </div>
                                <div className="flex w-[17px] shrink-0 flex-col bg-[#f0f0f0]">
                                    <Arrow label="Scroll up" d="M1 6l3-3 3 3" className="h-[17px]" />
                                    <div className="grow-[226]" />
                                    <div className="mx-px grow-[97] bg-[#cdcdcd]" />
                                    <div className="grow-[171]" />
                                    <Arrow label="Scroll down" d="M1 2l3 3 3-3" className="h-[17px]" />
                                </div>
                            </div>
                            <div className="mr-[17px] flex h-[17px] shrink-0 bg-[#f0f0f0]">
                                <Arrow label="Scroll left" d="M6 1L3 4l3 3" className="w-[17px]" />
                                <div className="grow-[257]" />
                                <div className="my-px grow-[404] bg-[#cdcdcd]" />
                                <div className="grow-[366]" />
                                <Arrow label="Scroll right" d="M2 1l3 3-3 3" className="w-[17px]" />
                            </div>
                        </div>
                    </div>

                    <div className="flex h-6 shrink-0 items-start bg-[#f0f0f0] pl-1">
                        <div role="tablist" className="flex">
                            {DOCS.map((doc) => <DocTab key={doc.name} doc={doc} />)}
                        </div>
                        <div className="ml-auto flex h-full items-center gap-[10px] pr-2">
                            <button aria-label="List designs">
                                <svg viewBox="0 0 9 5" className="h-[5px] w-[9px]"><path d="M0 0h9L4.500 5z" fill="#000" /></svg>
                            </button>
                            <button aria-label="Close tab">
                                <svg viewBox="0 0 9 9" className="h-2 w-2" stroke="#000" strokeWidth="2"><path d="M1 1l7 7M8 1L1 8" /></svg>
                            </button>
                        </div>
                    </div>
                </div>

                {/* SIDE TABS */}
                <div className="flex w-[21px] shrink-0 flex-col pl-px pt-[3px]">
                    {SIDE_TABS.map((tab) => (
                        <button
                            key={tab.label}
                            className={`flex flex-col items-center gap-[2px] rounded-l-sm border border-r-0 border-[#a0a0a0] bg-[#f0f0f0] pt-[2px] pb-1 leading-[18px] text-[#707070] ${tab.margin}`}
                        >
                            <Icon>{tab.icon}</Icon>
                            <span className="[writing-mode:vertical-rl]">{tab.label}</span>
                        </button>
                    ))}
                </div>
            </div>

            {/* DOCK BAR */}
            <div className="flex h-[23px] shrink-0 items-end border-b border-[#d0d0d0] pl-[29px]">
                <button className="flex h-[20px] items-center gap-[2px] rounded-t-sm border border-b-0 border-[#a0a0a0] px-[2px] text-[#707070]">
                    <DatabaseIcon />
                    Database
                </button>
            </div>

            {/* STATUS BAR */}
            <footer className="flex h-[17px] shrink-0 items-stretch gap-[2px] bg-[#f0f0f0] pl-[3px] pt-px">
                <div className="w-[257px] border border-b-0 border-[#a0a0a0] px-px">For Help, press F1</div>
                <div className="flex-1" />
                {STATUS.map((cell) => (
                    <div key={cell.text} className={`shrink-0 overflow-hidden whitespace-nowrap border border-b-0 border-[#a0a0a0] px-px ${cell.width}`}>
                        {cell.text}
                    </div>
                ))}
                <svg viewBox="0 0 14 16" className="h-4 w-[14px] shrink-0" fill="#b8b8b8">
                    <path d="M10 7h2v2h-2zM6 11h2v2H6zM10 11h2v2h-2zM2 14h2v2H2zM6 14h2v2H6zM10 14h2v2h-2z" />
                </svg>
            </footer>
        </div>
    );
}
